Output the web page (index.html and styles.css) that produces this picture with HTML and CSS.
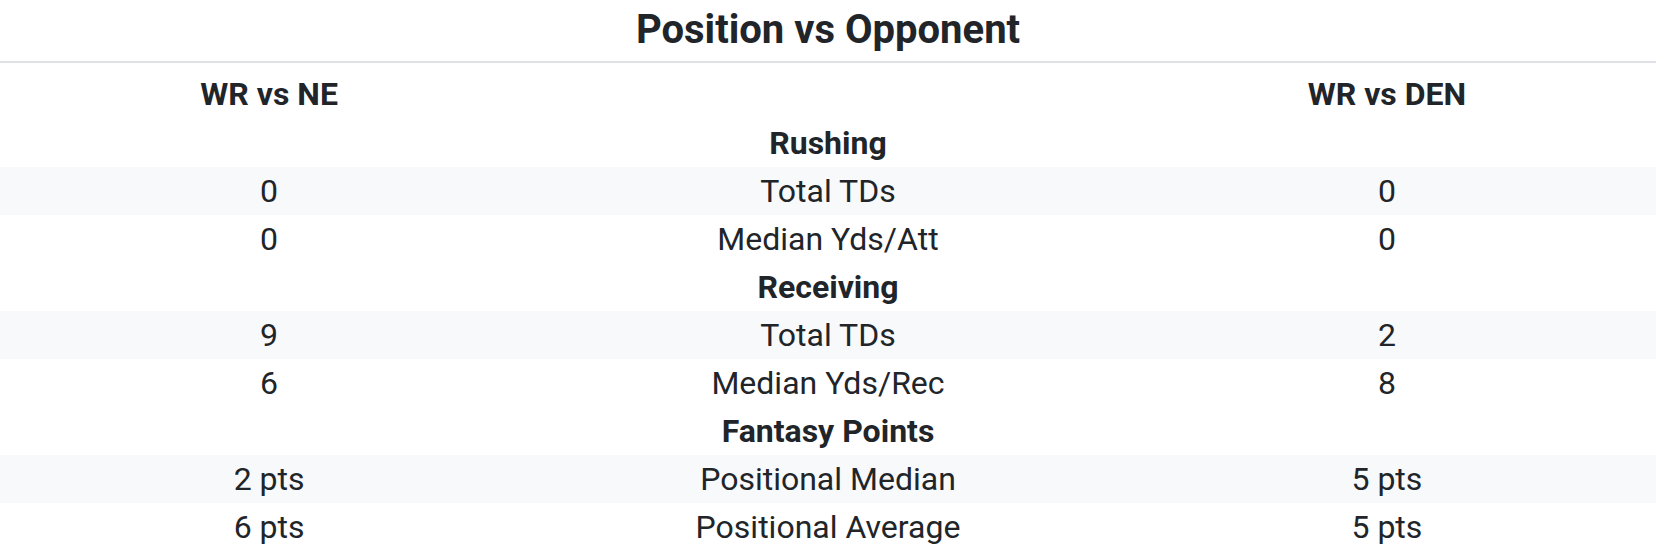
FILE: index.html
```html
<!DOCTYPE html>
<html>
<head>
<meta charset="utf-8">
<link rel="stylesheet" href="styles.css">
</head>
<body>
<div class="card">
  <div class="card-header">
    <h2 class="title">Position vs Opponent</h2>
  </div>
  <table class="stats">
    <colgroup>
      <col class="col-side">
      <col class="col-mid">
      <col class="col-side">
    </colgroup>
    <thead>
      <tr>
        <th>WR vs NE</th>
        <th></th>
        <th>WR vs DEN</th>
      </tr>
    </thead>
    <tbody>
      <tr class="section"><td></td><td>Rushing</td><td></td></tr>
      <tr class="odd"><td>0</td><td>Total TDs</td><td>0</td></tr>
      <tr><td>0</td><td>Median Yds/Att</td><td>0</td></tr>
      <tr class="section"><td></td><td>Receiving</td><td></td></tr>
      <tr class="odd"><td>9</td><td>Total TDs</td><td>2</td></tr>
      <tr><td>6</td><td>Median Yds/Rec</td><td>8</td></tr>
      <tr class="section"><td></td><td>Fantasy Points</td><td></td></tr>
      <tr class="odd"><td>2 pts</td><td>Positional Median</td><td>5 pts</td></tr>
      <tr><td>6 pts</td><td>Positional Average</td><td>5 pts</td></tr>
    </tbody>
  </table>
</div>
</body>
</html>
```

FILE: styles.css
```css
html, body {
  margin: 0;
  padding: 0;
  background: #ffffff;
}

body {
  font-family: Roboto, "Liberation Sans", Arial, sans-serif;
  color: #212529;
  font-size: 32px;
  line-height: 1.5;
}

.card {
  width: 100%;
}

.card-header {
  padding: 6px 0 7px;
  border-bottom: 2px solid #dee2e6;
  text-align: center;
}

.title {
  margin: 0;
  font-size: 40px;
  font-weight: 700;
  line-height: 1.2;
}

.stats {
  width: 100%;
  border-collapse: collapse;
  table-layout: fixed;
}

.col-side {
  width: 32.5%;
}

.col-mid {
  width: 35%;
}

.stats th,
.stats td {
  padding: 0;
  text-align: center;
  vertical-align: top;
}

.stats th {
  font-weight: 700;
  padding-top: 7px;
  padding-bottom: 1px;
}

.stats tr.section td {
  font-weight: 700;
}

.stats tr.odd {
  background: #f8f9fa;
}
```
